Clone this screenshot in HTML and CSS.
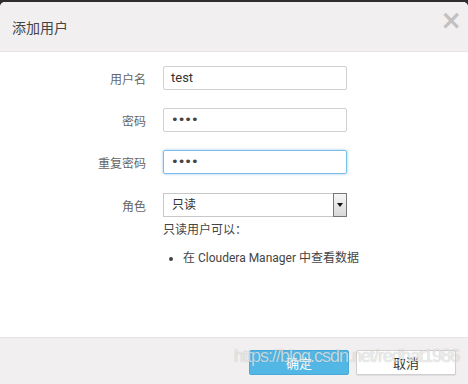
FILE: index.html
```html
<!DOCTYPE html>
<html lang="zh-CN">
<head>
<meta charset="utf-8">
<title>添加用户</title>
<link rel="stylesheet" href="styles.css">
</head>
<body>
<div class="modal">
  <div class="modal-header">
    <h3 class="title">添加用户</h3>
    <span class="close">×</span>
  </div>
  <div class="modal-body">
    <div class="row">
      <label class="label">用户名</label>
      <div class="input">test</div>
    </div>
    <div class="row">
      <label class="label">密码</label>
      <div class="input dots">••••</div>
    </div>
    <div class="row">
      <label class="label">重复密码</label>
      <div class="input dots focus">••••</div>
    </div>
    <div class="row">
      <label class="label">角色</label>
      <div class="select">
        <span class="select-text">只读</span>
        <span class="select-btn"><span class="arrow"></span></span>
      </div>
    </div>
    <div class="help">
      <p class="help-title">只读用户可以：</p>
      <ul class="help-list">
        <li>在 Cloudera Manager 中查看数据</li>
      </ul>
    </div>
  </div>
  <div class="modal-footer">
    <button class="btn btn-primary">确定</button>
    <button class="btn btn-default">取消</button>
    <span class="watermark">https://blog.csdn.net/redhat1986</span>
  </div>
</div>
</body>
</html>
```
FILE: styles.css
```css
html, body {
  margin: 0;
  padding: 0;
}
body {
  background: #2e2e2e;
  width: 468px;
  height: 384px;
  overflow: hidden;
  font-family: Roboto, "Noto Sans CJK SC", sans-serif;
  font-size: 12px;
  color: #333;
}
.modal {
  margin-top: 2px;
  height: 382px;
  background: #fff;
  border-radius: 5px 5px 0 0;
  display: flex;
  flex-direction: column;
  overflow: hidden;
}
.modal-header {
  height: 49px;
  background: #f1efef;
  border-bottom: 1px solid #e6e4e4;
  display: flex;
  align-items: center;
  justify-content: space-between;
  padding: 0 6px 0 12px;
  flex: none;
}
.title {
  margin: 0;
  font-size: 14px;
  font-weight: normal;
  color: #444;
  padding-top: 1px;
}
.close {
  font-family: "DejaVu Sans", sans-serif;
  font-size: 26px;
  font-weight: bold;
  color: #c2c0c0;
  line-height: 1;
  align-self: flex-start;
  margin-top: 5px;
}
.modal-body {
  flex: 1;
  padding-top: 14px;
}
.row {
  display: flex;
  align-items: center;
  height: 24px;
  margin-bottom: 18px;
}
.row:nth-child(3) {
  margin-bottom: 19px;
}
.label {
  width: 146px;
  text-align: right;
  color: #666;
  margin-right: 17px;
  flex: none;
}
.input {
  box-sizing: border-box;
  width: 184px;
  height: 24px;
  border: 1px solid #d0d0d0;
  border-radius: 2px;
  padding: 0 7px;
  line-height: 22px;
  font-size: 13px;
  color: #333;
}
.dots {
  font-family: "DejaVu Sans", sans-serif;
  font-size: 13px;
  letter-spacing: -1px;
  color: #444;
}
.focus {
  border-color: #7fbde9;
  box-shadow: 0 0 3px rgba(102, 175, 233, 0.7);
}
.select {
  box-sizing: border-box;
  width: 184px;
  height: 24px;
  border: 1px solid #c8c8c8;
  display: flex;
  align-items: stretch;
  justify-content: space-between;
}
.select-text {
  padding-left: 8px;
  line-height: 22px;
  color: #333;
}
.select-btn {
  width: 12px;
  border: 1px solid #777;
  background: linear-gradient(#f6f6f6, #d8d8d8);
  display: flex;
  align-items: center;
  justify-content: center;
  margin: -1px;
}
.arrow {
  width: 0;
  height: 0;
  border-left: 3px solid transparent;
  border-right: 3px solid transparent;
  border-top: 4px solid #111;
}
.help {
  margin-left: 163px;
  margin-top: -14px;
  color: #444;
}
.help-title {
  margin: 0;
  line-height: 18px;
}
.help-list {
  margin: 10px 0 0 0;
  padding-left: 20px;
  line-height: 18px;
  font-size: 12px;
}
.help-list li {
  margin: 0;
}
.modal-footer {
  position: relative;
  flex: none;
  height: 47px;
  background: #f1efef;
  border-top: 1px solid #e4e2e2;
  display: flex;
  justify-content: flex-end;
  align-items: flex-start;
  gap: 7px;
  padding: 12px 12px 0 0;
  box-sizing: border-box;
}
.btn {
  width: 100px;
  height: 25px;
  font-family: Roboto, "Noto Sans CJK SC", sans-serif;
  font-size: 13px;
  border-radius: 2px;
  padding: 0;
}
.btn-primary {
  background: #53b7e5;
  border: 1px solid #46a9d8;
  color: #fff;
}
.btn-default {
  background: #fff;
  border: 1px solid #cfcfcf;
  color: #333;
  box-shadow: 0 1px 1px rgba(0,0,0,0.08);
}
.watermark {
  position: absolute;
  left: 234px;
  top: 8px;
  font-family: "Liberation Sans", Arial, sans-serif;
  font-size: 18px;
  letter-spacing: -1px;
  color: rgba(255, 255, 255, 0.7);
  text-shadow: 0 0 1px rgba(0, 0, 0, 0.3);
  white-space: nowrap;
  pointer-events: none;
}
```
